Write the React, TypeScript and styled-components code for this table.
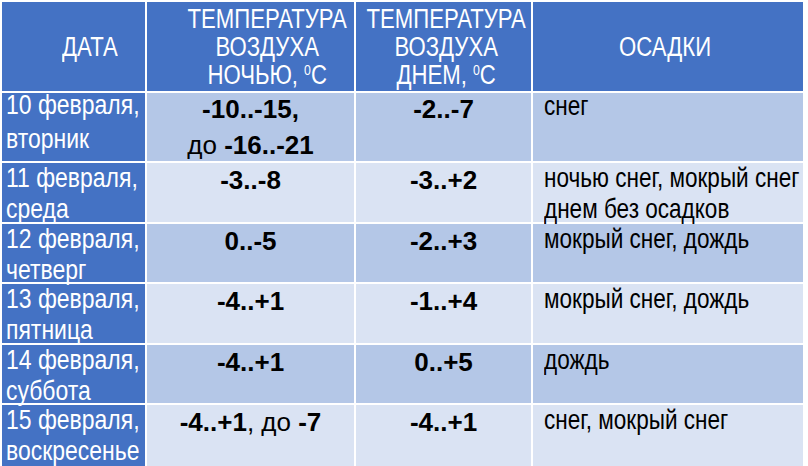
import React from "react";
import styled, { createGlobalStyle } from "styled-components";

const FONT = `"Liberation Sans", Arial, sans-serif`;

const GlobalStyle = createGlobalStyle`
  html, body {
    margin: 0;
    padding: 0;
    background: #ffffff;
    overflow: hidden;
  }
  body {
    font-family: ${FONT};
  }
`;

const Table = styled.div`
  display: grid;
  grid-template-columns: 143px 207px 175px 270px;
  grid-template-rows: 89px 68px 59px 58px 59px 58px 62px;
  gap: 2px;
  width: max-content;
  margin: 2px 0 0 2px;
  background: #ffffff;
`;

const HeaderCell = styled.div<{ $shift: number }>`
  background: #4472c4;
  color: #ffffff;
  display: flex;
  align-items: center;
  justify-content: center;
  min-width: 0;
  padding-left: ${(p) => Math.max(p.$shift, 0) * 2}px;
  padding-right: ${(p) => Math.max(-p.$shift, 0) * 2}px;
`;

/* Arial Narrow look: Liberation Sans squeezed horizontally */
const HeaderText = styled.div`
  flex: none;
  font-size: 27px;
  line-height: 28px;
  text-align: center;
  white-space: nowrap;
  transform: scaleX(0.82);
  transform-origin: center;
`;

const Sup = styled.sup`
  font-size: 15px;
  line-height: 0;
  vertical-align: 9px;
`;

const DateCell = styled.div<{ $tall: boolean }>`
  background: #4472c4;
  color: #ffffff;
  display: flex;
  flex-direction: column;
  gap: ${(p) => (p.$tall ? 10 : 7)}px;
  padding: ${(p) => (p.$tall ? 0 : 3)}px 0 0 4px;
  min-width: 0;
  font-size: 28px;
  line-height: 24px;
  white-space: nowrap;
`;

const NarrowLine = styled.div`
  transform: scaleX(0.82);
  transform-origin: left center;
`;

const TempCell = styled.div<{ $band: boolean; $tall: boolean }>`
  background: ${(p) => (p.$band ? "#b4c7e7" : "#dae3f3")};
  color: #000000;
  display: flex;
  flex-direction: column;
  align-items: center;
  gap: 8px;
  padding-top: ${(p) => (p.$tall ? 2 : 3)}px;
  font-size: 26px;
  line-height: 28px;
  white-space: nowrap;
`;

const Bold = styled.span`
  font-weight: 700;
`;

const Plain = styled.span`
  font-weight: 400;
`;

const PrecipCell = styled.div<{ $band: boolean; $tall: boolean }>`
  background: ${(p) => (p.$band ? "#b4c7e7" : "#dae3f3")};
  color: #000000;
  display: flex;
  flex-direction: column;
  gap: ${(p) => (p.$tall ? 10 : 7)}px;
  padding: ${(p) => (p.$tall ? 1 : 3)}px 0 0 11px;
  min-width: 0;
  font-size: 27.5px;
  line-height: 24px;
  white-space: nowrap;
`;

type Row = {
  date: string;
  day: string;
  night: React.ReactNode[];
  dayTemp: string;
  precip: string[];
};

const rows: Row[] = [
  {
    date: "10 февраля,",
    day: "вторник",
    night: [
      <Bold key="a">-10..-15,</Bold>,
      <span key="b">
        <Plain>до </Plain>
        <Bold>-16..-21</Bold>
      </span>,
    ],
    dayTemp: "-2..-7",
    precip: ["снег"],
  },
  {
    date: "11 февраля,",
    day: "среда",
    night: [<Bold key="a">-3..-8</Bold>],
    dayTemp: "-3..+2",
    precip: ["ночью снег, мокрый снег", "днем без осадков"],
  },
  {
    date: "12 февраля,",
    day: "четверг",
    night: [<Bold key="a">0..-5</Bold>],
    dayTemp: "-2..+3",
    precip: ["мокрый снег, дождь"],
  },
  {
    date: "13 февраля,",
    day: "пятница",
    night: [<Bold key="a">-4..+1</Bold>],
    dayTemp: "-1..+4",
    precip: ["мокрый снег, дождь"],
  },
  {
    date: "14 февраля,",
    day: "суббота",
    night: [<Bold key="a">-4..+1</Bold>],
    dayTemp: "0..+5",
    precip: ["дождь"],
  },
  {
    date: "15 февраля,",
    day: "воскресенье",
    night: [
      <span key="a">
        <Bold>-4..+1</Bold>
        <Plain>, до </Plain>
        <Bold>-7</Bold>
      </span>,
    ],
    dayTemp: "-4..+1",
    precip: ["снег, мокрый снег"],
  },
];

export default function App() {
  return (
    <>
      <GlobalStyle />
      <Table>
        <HeaderCell $shift={16}>
          <HeaderText>ДАТА</HeaderText>
        </HeaderCell>
        <HeaderCell $shift={17}>
          <HeaderText>
            ТЕМПЕРАТУРА
            <br />
            ВОЗДУХА
            <br />
            НОЧЬЮ, <Sup>0</Sup>С
          </HeaderText>
        </HeaderCell>
        <HeaderCell $shift={3}>
          <HeaderText>
            ТЕМПЕРАТУРА
            <br />
            ВОЗДУХА
            <br />
            ДНЕМ, <Sup>0</Sup>С
          </HeaderText>
        </HeaderCell>
        <HeaderCell $shift={-3}>
          <HeaderText>ОСАДКИ</HeaderText>
        </HeaderCell>
        {rows.map((r, i) => {
          const band = i % 2 === 0;
          const tall = r.night.length > 1;
          return (
            <React.Fragment key={r.date}>
              <DateCell $tall={tall}>
                <NarrowLine>{r.date}</NarrowLine>
                <NarrowLine>{r.day}</NarrowLine>
              </DateCell>
              <TempCell $band={band} $tall={tall}>
                {r.night.map((n, j) => (
                  <div key={j}>{n}</div>
                ))}
              </TempCell>
              <TempCell $band={band} $tall={tall}>
                <Bold>{r.dayTemp}</Bold>
              </TempCell>
              <PrecipCell $band={band} $tall={tall}>
                {r.precip.map((t) => (
                  <NarrowLine key={t}>{t}</NarrowLine>
                ))}
              </PrecipCell>
            </React.Fragment>
          );
        })}
      </Table>
    </>
  );
}
